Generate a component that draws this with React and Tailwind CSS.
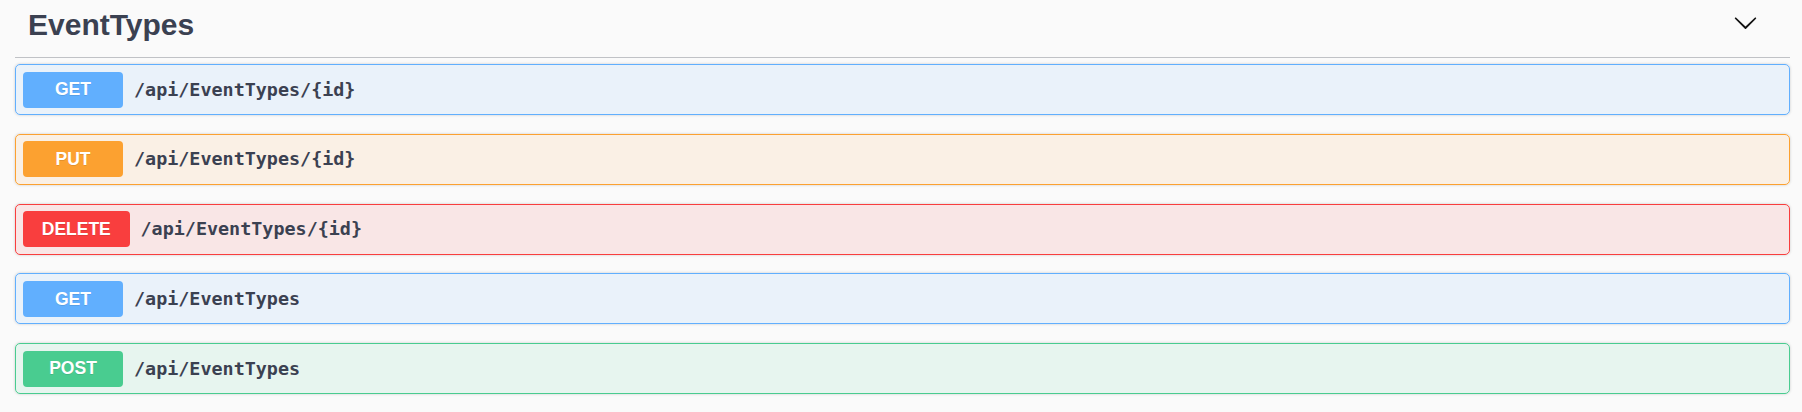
import React from 'react';

const ops = [
  { method: 'GET', path: '/api/EventTypes/{id}', badge: 'bg-[#61affe]', box: 'bg-[#61affe]/10 border-[#61affe]' },
  { method: 'PUT', path: '/api/EventTypes/{id}', badge: 'bg-[#fca130]', box: 'bg-[#fca130]/10 border-[#fca130]' },
  { method: 'DELETE', path: '/api/EventTypes/{id}', badge: 'bg-[#f93e3e]', box: 'bg-[#f93e3e]/10 border-[#f93e3e]' },
  { method: 'GET', path: '/api/EventTypes', badge: 'bg-[#61affe]', box: 'bg-[#61affe]/10 border-[#61affe]' },
  { method: 'POST', path: '/api/EventTypes', badge: 'bg-[#49cc90]', box: 'bg-[#49cc90]/10 border-[#49cc90]' },
];

const Chevron = () => (
  <svg width="25" height="25" viewBox="0 0 20 20" className="fill-[#111]">
    <path d="M17.418 6.109c.272-.268.709-.268.979 0s.271.701 0 .969l-7.908 7.83c-.27.268-.707.268-.979 0l-7.908-7.83c-.27-.268-.27-.701 0-.969.271-.268.709-.268.979 0L10 13.25l7.418-7.141z" />
  </svg>
);

const App = () => {
  return (
    <div className="min-h-[412px] bg-[#fafafa] pl-[15px] pr-[12px]">
      <div className="flex items-start justify-between border-b border-[#3b4151]/30 pl-[13px] pr-[32px] pt-[6px] pb-[13px]">
        <h3 className="font-['Liberation_Sans',Arial,sans-serif] text-[30px] leading-[38px] font-bold text-[#3b4151]">EventTypes</h3>
        <div className="pt-[4px]"><Chevron /></div>
      </div>

      <div className="mt-[6px] flex flex-col gap-[18.75px]">
        {ops.map((op, i) => (
          <div key={i} className={`flex h-[51px] items-center rounded-[5px] border px-[7px] shadow-[0_0_3px_rgba(0,0,0,0.19)] ${op.box}`}>
            <span className={`flex h-[36px] min-w-[100px] items-center justify-center rounded-[4px] px-[18.75px] font-['Liberation_Sans',Arial,sans-serif] text-[17.5px] font-bold text-white [text-shadow:0_1px_0_rgba(0,0,0,0.1)] ${op.badge}`}>
              {op.method}
            </span>
            <span className="pl-[11px] font-['DejaVu_Sans_Mono',monospace] text-[18.4px] font-bold text-[#3b4151]">
              {op.path}
            </span>
          </div>
        ))}
      </div>
    </div>
  );
};

export default App;
